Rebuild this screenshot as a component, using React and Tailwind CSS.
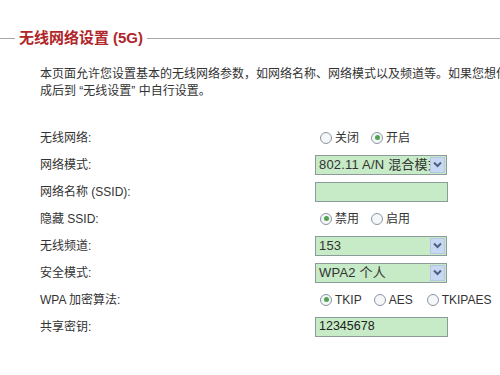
import React from "react";

function Radio({ checked, label, className = "" }) {
  return (
    <span className={"inline-flex items-center " + className}>
      <span className="w-[12px] h-[12px] rounded-full border border-[#8a96a4] bg-[#f4f6f8] flex items-center justify-center">
        {checked && <span className="w-[5px] h-[5px] rounded-full bg-[#4fa34f]" />}
      </span>
      <span className="ml-[3px]">{label}</span>
    </span>
  );
}

function Select({ value }) {
  return (
    <div className="w-[132px] h-[20px] border border-[#8c9a9a] bg-[#c6ebc6] flex items-center overflow-hidden">
      <div className="flex-1 overflow-hidden whitespace-nowrap pl-[3px] text-[#333] text-[13px] tracking-[0.2px]">{value}</div>
      <div className="w-[15px] h-[16px] mr-[1px] border border-[#b4c6e4] bg-[#c9d8f2] flex items-center justify-center">
        <svg width="9" height="7" viewBox="0 0 9 7">
          <path d="M1 1.5 L4.5 5 L8 1.5" fill="none" stroke="#4d6185" strokeWidth="2" />
        </svg>
      </div>
    </div>
  );
}

function Input({ value = "" }) {
  return (
    <div className="w-[133px] h-[20px] border border-[#8c9a9a] bg-[#c6ebc6] flex items-center pl-[3px] text-[#222] text-[12.5px]">
      {value}
    </div>
  );
}

export default function App() {
  const rows = [
    ["无线网络:", <div className="pl-[5px] flex items-center"><Radio label="关闭" /><Radio checked label="开启" className="ml-[12px]" /></div>],
    ["网络模式:", <Select value="802.11 A/N 混合模式" />],
    ["网络名称 (SSID):", <Input />],
    ["隐藏 SSID:", <div className="pl-[5px] flex items-center"><Radio checked label="禁用" /><Radio label="启用" className="ml-[12px]" /></div>],
    ["无线频道:", <Select value="153" />],
    ["安全模式:", <Select value="WPA2 个人" />],
    ["WPA 加密算法:", <div className="pl-[5px] flex items-center"><Radio checked label="TKIP" /><Radio label="AES" className="ml-[12px]" /><Radio label="TKIPAES" className="ml-[14px]" /></div>],
    ["共享密钥:", <Input value="12345678" />],
  ];
  return (
    <div className="w-[500px] h-[375px] bg-white overflow-hidden text-[12px] text-[#333] font-['Liberation_Sans','Noto_Sans_CJK_SC',sans-serif]">
      <div className="flex items-center h-[16px] mt-[30px]">
        <div className="w-[15px] h-px bg-[#a8a8a8]" />
        <span className="px-[4px] text-[15px] font-bold text-[#b0262a] whitespace-nowrap">
          无线网络设置<span className="ml-[4px]">(5G)</span>
        </span>
        <div className="flex-1 h-px bg-[#a8a8a8]" />
      </div>
      <div className="mt-[20px] pl-[40px] leading-[17px] whitespace-nowrap overflow-hidden">
        <div>本页面允许您设置基本的无线网络参数，如网络名称、网络模式以及频道等。如果您想作</div>
        <div>成后到 “无线设置” 中自行设置。</div>
      </div>
      <div className="mt-[24px]">
        {rows.map(([label, ctrl], i) => (
          <div key={i} className="h-[27px] flex items-center">
            <div className="w-[315px] pl-[40px] whitespace-nowrap">{label}</div>
            <div>{ctrl}</div>
          </div>
        ))}
      </div>
    </div>
  );
}
